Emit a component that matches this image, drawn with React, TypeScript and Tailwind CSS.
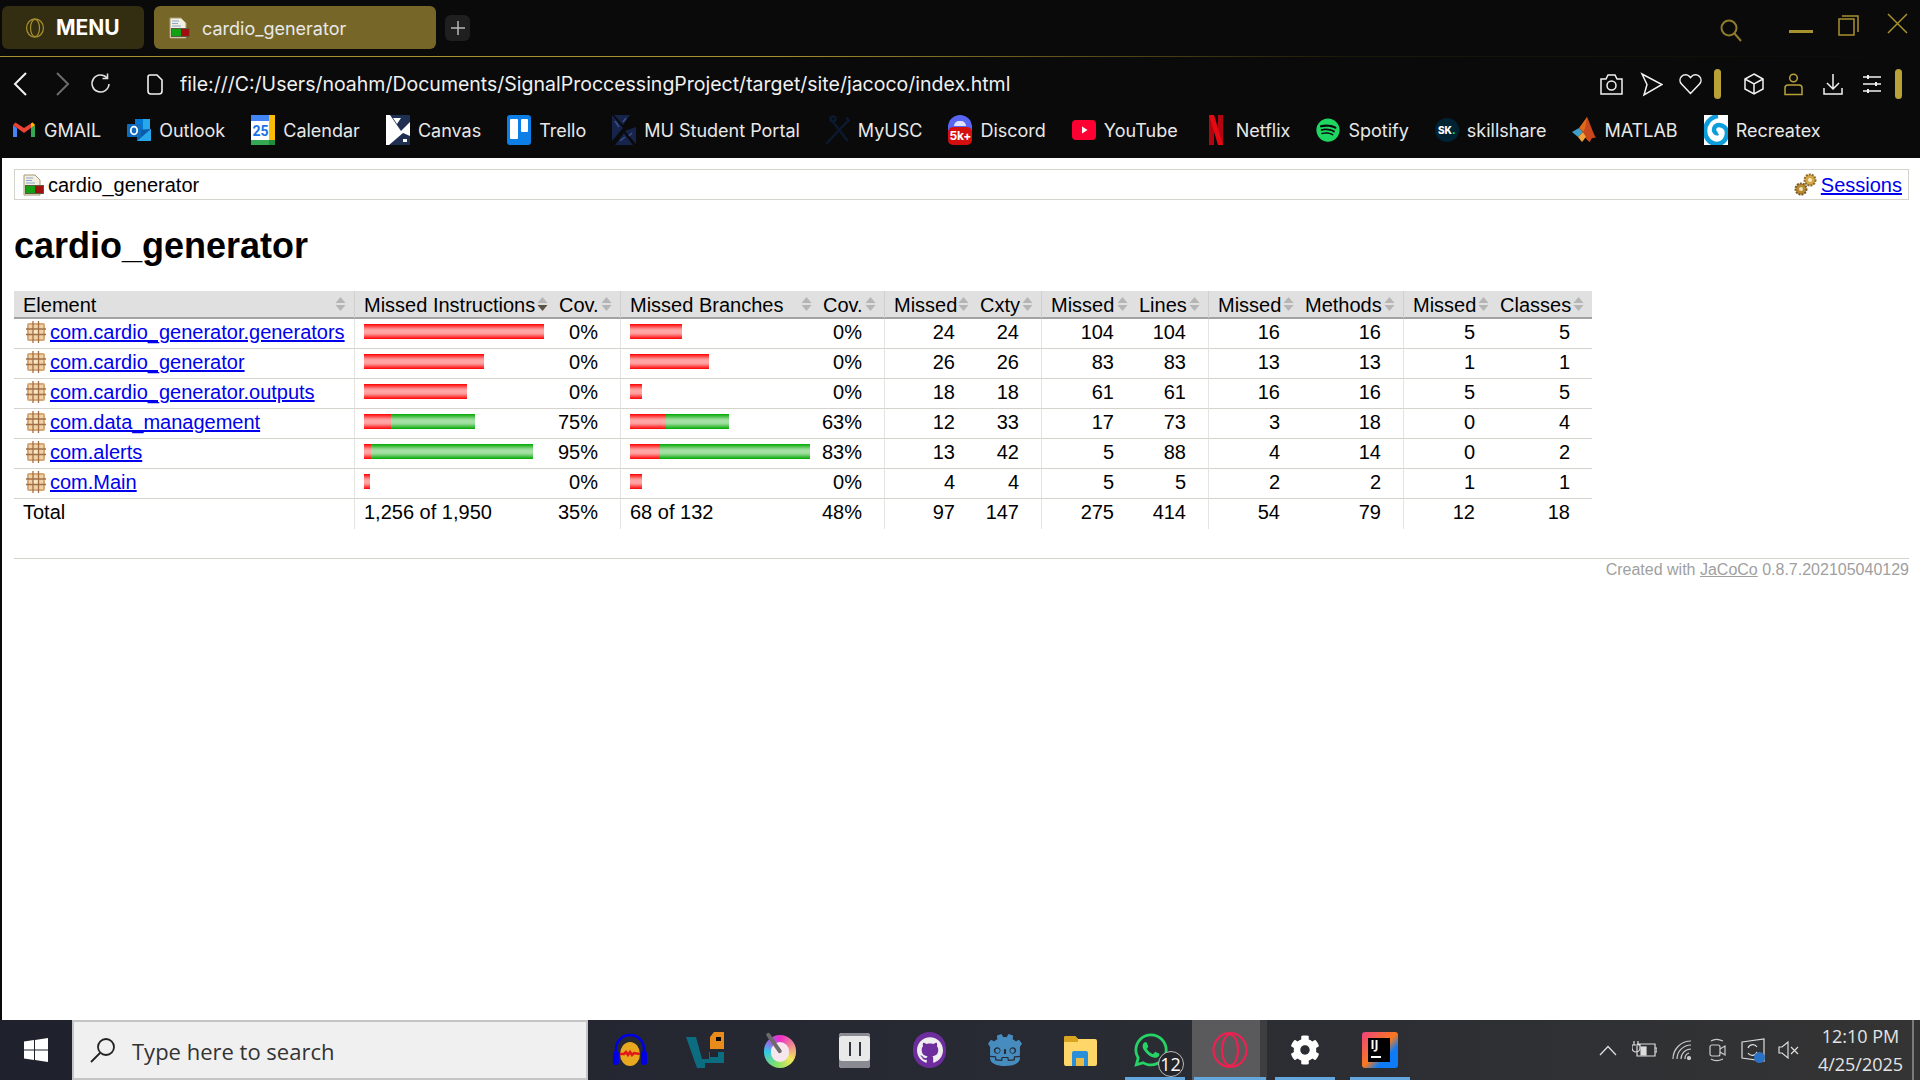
import { FaCog, FaSpotify, FaWhatsapp } from "react-icons/fa"
import { SiGithub, SiGodotengine } from "react-icons/si"

type Row = {
  name: string
  ins: [number, number]
  insCov: string
  br: [number, number]
  brCov: string
  nums: string[]
}

const rows: Row[] = [
  { name: "com.cardio_generator.generators", ins: [180, 0], insCov: "0%", br: [52, 0], brCov: "0%", nums: ["24", "24", "104", "104", "16", "16", "5", "5"] },
  { name: "com.cardio_generator", ins: [120, 0], insCov: "0%", br: [79, 0], brCov: "0%", nums: ["26", "26", "83", "83", "13", "13", "1", "1"] },
  { name: "com.cardio_generator.outputs", ins: [103, 0], insCov: "0%", br: [12, 0], brCov: "0%", nums: ["18", "18", "61", "61", "16", "16", "5", "5"] },
  { name: "com.data_management", ins: [27, 84], insCov: "75%", br: [36, 63], brCov: "63%", nums: ["12", "33", "17", "73", "3", "18", "0", "4"] },
  { name: "com.alerts", ins: [7, 162], insCov: "95%", br: [30, 150], brCov: "83%", nums: ["13", "42", "5", "88", "4", "14", "0", "2"] },
  { name: "com.Main", ins: [6, 0], insCov: "0%", br: [12, 0], brCov: "0%", nums: ["4", "4", "5", "5", "2", "2", "1", "1"] },
]

const totals = ["97", "147", "275", "414", "54", "79", "12", "18"]

const bookmarks: { label: string; icon: React.ReactNode }[] = [
  { label: "GMAIL", icon: <GmailIcon /> },
  { label: "Outlook", icon: <OutlookIcon /> },
  { label: "Calendar", icon: <CalendarIcon /> },
  { label: "Canvas", icon: <CanvasIcon /> },
  { label: "Trello", icon: <TrelloIcon /> },
  { label: "MU Student Portal", icon: <PortalIcon /> },
  { label: "MyUSC", icon: <ToolsIcon /> },
  { label: "Discord", icon: <DiscordIcon /> },
  { label: "YouTube", icon: <YoutubeIcon /> },
  { label: "Netflix", icon: <NetflixIcon /> },
  { label: "Spotify", icon: <FaSpotify className="h-6 w-6 text-[#1ed760]" /> },
  { label: "skillshare", icon: <SkillshareIcon /> },
  { label: "MATLAB", icon: <MatlabIcon /> },
  { label: "Recreatex", icon: <RecreatexIcon /> },
]

function GmailIcon() {
  return (
    <svg width="24" height="24" viewBox="0 0 24 24">
      <path d="M1 7v12h4V10z" fill="#4285f4" />
      <path d="M23 7v12h-4V10z" fill="#34a853" />
      <path d="M1 7l11 8 11-8-2.500-2.500L12 10 3.500 4.500z" fill="#ea4335" />
      <path d="M19 10l4-3-2.500-2.500L19 5.600z" fill="#fbbc04" />
    </svg>
  )
}

function OutlookIcon() {
  return (
    <svg width="24" height="24" viewBox="0 0 24 24">
      <rect x="8" y="1" width="15" height="11" fill="#28a8ea" />
      <rect x="8" y="1" width="8" height="11" fill="#0078d4" />
      <path d="M10 12l14-1v11a1 1 0 0 1-1 1H10z" fill="#0a5ca8" />
      <path d="M10 23l14-12v11a1 1 0 0 1-1 1z" fill="#28a8ea" />
      <rect x="0" y="6" width="14" height="13" rx="1" fill="#0f6cbd" />
      <ellipse cx="7" cy="12.500" rx="3.200" ry="3.800" fill="none" stroke="#fff" strokeWidth="1.800" />
    </svg>
  )
}

function CalendarIcon() {
  return (
    <svg width="24" height="30" viewBox="0 0 24 30">
      <rect width="24" height="30" rx="2" fill="#fff" />
      <rect width="24" height="6" fill="#4285f4" />
      <rect y="25" width="18" height="5" fill="#34a853" />
      <rect x="18" width="6" height="25" fill="#fbbc04" />
      <rect x="18" y="25" width="6" height="5" fill="#1e8e3e" />
      <text x="9.500" y="21" textAnchor="middle" fontSize="14" fontWeight="700" fill="#1a73e8" fontFamily="Roboto, sans-serif">25</text>
    </svg>
  )
}

function CanvasIcon() {
  return (
    <svg width="24" height="30" viewBox="0 0 24 30">
      <rect width="24" height="30" fill="#fff" />
      <path d="M4 0h20v7L15 16z" fill="#1f2f52" />
      <path d="M3 30h21v-9l-7-3z" fill="#1f2f52" />
      <path d="M7 3l4 6 4-6zM17 24h4v3h-4z" fill="#fff" />
    </svg>
  )
}

function TrelloIcon() {
  return (
    <svg width="24" height="30" viewBox="0 0 24 30">
      <rect width="24" height="30" rx="3" fill="#0c7ee6" />
      <rect x="3" y="4" width="8" height="20" rx="1" fill="#fff" />
      <rect x="14" y="4" width="7" height="13" rx="1" fill="#fff" />
    </svg>
  )
}

function PortalIcon() {
  return (
    <svg width="24" height="30" viewBox="0 0 24 30">
      <path d="M0 0l11 13L0 26zM2 0h16L11 10zM24 12v17L13 16zM3 30l9-12 9 12z" fill="#16234a" />
      <path d="M3 6l4 6M14 3l-3 4M20 18l-3 3M8 26l5-4" stroke="#3a4f86" strokeWidth="1.500" />
    </svg>
  )
}

function ToolsIcon() {
  return (
    <svg width="24" height="30" viewBox="0 0 24 30" fill="none" stroke="#0b1a2e" strokeWidth="2.500" strokeLinecap="round">
      <path d="M1 28L16 12l5-5M21 3l2 3" />
      <path d="M4 3l17 22" />
      <circle cx="7" cy="4" r="2.500" />
    </svg>
  )
}

function DiscordIcon() {
  return (
    <div className="relative h-[30px] w-6">
      <div className="h-[26px] w-6 rounded-full bg-[#5865f2]" />
      <div className="absolute left-1/2 top-[6px] h-[5px] w-3 -translate-x-1/2 rounded-t-full bg-white/80" />
      <span className="absolute bottom-0 left-0 flex h-[18px] w-6 items-center justify-center rounded-[5px] bg-[#d50e0e] text-[12px] font-bold leading-none text-white">5k+</span>
    </div>
  )
}

function YoutubeIcon() {
  return (
    <svg width="24" height="20" viewBox="0 0 24 20">
      <rect width="24" height="20" rx="4" fill="#ff0033" />
      <path d="M10 6.500l5.500 3.500-5.500 3.500z" fill="#fff" />
    </svg>
  )
}

function NetflixIcon() {
  return (
    <svg width="14" height="30" viewBox="0 0 14 30">
      <path d="M0 0h5v30l-5 0z" fill="#b1060f" />
      <path d="M9 0h5v30H9z" fill="#b1060f" />
      <path d="M0 0h5l9 30H9z" fill="#e50914" />
    </svg>
  )
}

function SkillshareIcon() {
  return (
    <div className="relative flex h-6 w-6 items-center justify-center rounded-full bg-[#002333] text-[10px] font-extrabold leading-none text-white">
      SK<span className="text-[#00ff84]">.</span>
    </div>
  )
}

function MatlabIcon() {
  return (
    <svg width="24" height="28" viewBox="0 0 24 28">
      <path d="M0 16l7-4 4 4-5 5z" fill="#3f9fc8" />
      <path d="M7 12l8-11 3 13-7 2z" fill="#e06a1b" />
      <path d="M15 1c3 6 6 16 9 21-3-1-5 0-6 4-3-1-5-5-7-10 3-4 3-10 4-15z" fill="#c9471a" />
      <path d="M6 21l5-5 3 5-4 5z" fill="#f2a33a" />
    </svg>
  )
}

function RecreatexIcon() {
  return (
    <svg width="24" height="30" viewBox="0 0 24 30">
      <rect width="24" height="30" fill="#fff" />
      <path d="M14 1C6 2 1 9 1 16c0 7 5 13 12 13 6 0 10-5 10-11 0-5-4-8-8-8-3 0-5 2-5 5 0 2 2 4 4 3" fill="none" stroke="#0e9ddb" strokeWidth="4.500" />
    </svg>
  )
}

function ReportIcon() {
  return (
    <svg width="22" height="22" viewBox="0 0 22 22">
      <path d="M2 1h11l5 5v15H2z" fill="#f3efe0" stroke="#a89a72" />
      <path d="M4 4h7M4 6.500h6M4 9h9" stroke="#8aa8d0" />
      <rect x="3" y="11" width="19" height="9" fill="#5b5a44" />
      <rect x="4" y="12" width="9" height="7" fill="#12a112" />
      <rect x="13" y="12" width="8" height="7" fill="#a00f0f" />
    </svg>
  )
}

function PackageIcon() {
  return (
    <svg width="20" height="22" viewBox="0 0 20 22" className="shrink-0">
      <rect x="1" y="2" width="18" height="18" rx="2" fill="#d9a877" />
      <rect x="3" y="4" width="14" height="14" fill="#f0d2a8" />
      <rect x="7" y="8" width="6" height="6" fill="#f9e6c6" />
      <path d="M7 0v22M12.500 0v22M0 8h20M0 13.500h20" stroke="#a06f45" strokeWidth="1.300" />
    </svg>
  )
}

function GearsIcon() {
  return (
    <svg width="24" height="24" viewBox="0 0 24 24">
      <circle cx="7" cy="16" r="5.500" fill="#b98a35" stroke="#7d5a25" strokeDasharray="2 1" strokeWidth="2" />
      <circle cx="7" cy="16" r="2" fill="#efe3b5" />
      <circle cx="16" cy="7" r="5.500" fill="#d3a64a" stroke="#916c2a" strokeDasharray="2 1" strokeWidth="2" />
      <circle cx="16" cy="7" r="2" fill="#f5ecc4" />
    </svg>
  )
}

function SortArrow({ active }: { active?: boolean }) {
  return (
    <svg width="11" height="14" viewBox="0 0 11 14" className="absolute right-[8px] top-[6px]">
      <path d="M5.500 0l5 6h-10z" fill="#b5b5b5" />
      <path d="M5.500 14l5-6h-10z" fill={active ? "#5a5044" : "#b5b5b5"} />
    </svg>
  )
}

function Th({ label, first, left, active, className }: { label: string; first?: boolean; left?: boolean; active?: boolean; className: string }) {
  return (
    <th className={`relative h-[27px] whitespace-nowrap border-b-2 border-[#a3a3a3] bg-[#e0e0e0] p-0 font-normal ${left ? "text-left" : "text-right"} ${first ? "border-l border-l-[#cfcfcf]" : ""} ${className}`}>
      <span className={`block pr-[22px] pt-[2px] ${first || left ? "pl-[9px]" : "pl-[3px]"}`}>{label}</span>
      <SortArrow active={active} />
    </th>
  )
}

function Num({ first, last, children }: { first?: boolean; last?: boolean; children: React.ReactNode }) {
  return (
    <td className={`h-[30px] p-0 pb-[4px] pr-[22px] text-right ${last ? "" : "border-b border-[#d6d3ce]"} ${first ? "border-l border-l-[#e6e4e0]" : ""}`}>
      {children}
    </td>
  )
}

function Bar({ parts }: { parts: [number, number] }) {
  return (
    <div className="flex h-[15px]">
      <div className="h-full bg-[linear-gradient(to_bottom,#ff0000,#ff9c9c_35%,#ffa8a8_50%,#ff9c9c_65%,#ff0000)]" style={{ width: parts[0] }} />
      <div className="h-full bg-[linear-gradient(to_bottom,#00a800,#98dc98_35%,#a8e2a8_50%,#98dc98_65%,#00a800)]" style={{ width: parts[1] }} />
    </div>
  )
}

function TaskSlot({ children, underline, className }: { children: React.ReactNode; underline?: string; className?: string }) {
  return (
    <div className={`relative flex h-full w-[75px] items-center justify-center ${className ?? ""}`}>
      {children}
      {underline && <div className={`absolute bottom-0 h-[3px] bg-[#63a7de] ${underline}`} />}
    </div>
  )
}

export default function App() {
  return (
    <div className="flex h-screen w-[1920px] flex-col overflow-hidden bg-white font-['Liberation_Sans',Arial,sans-serif] text-[20px] text-black">
      {/* Browser chrome */}
      <div className="h-[158px] shrink-0 bg-[#0a0a0a] font-['Inter',sans-serif] text-[#e8e8e8]">
        <div className="flex h-[56px] pl-[2px] pt-[6px]">
          <div className="flex h-[43px] w-[142px] items-center gap-[12px] rounded-md bg-[#332d12] pl-[24px] text-[21px] font-bold text-white">
            <svg width="18" height="20" viewBox="0 0 18 20" fill="none" stroke="#a8912f" strokeWidth="1.200">
              <ellipse cx="9" cy="10" rx="8.400" ry="9.200" />
              <ellipse cx="9" cy="10" rx="4.500" ry="8.600" />
            </svg>
            MENU
          </div>
          <div className="ml-[10px] flex h-[43px] w-[282px] items-center gap-[12px] rounded-md bg-[#766729] pl-[14px] text-[18px]">
            <ReportIcon />
            <span className="pt-[1px]">cardio_generator</span>
          </div>
          <div className="ml-[9px] mt-[9px] flex h-[26px] w-[25px] items-center justify-center rounded-md bg-[#1f1f1f]">
            <svg width="14" height="14" viewBox="0 0 14 14" stroke="#b8b8b8" strokeWidth="1.500">
              <path d="M7 0v14M0 7h14" />
            </svg>
          </div>
          <div className="ml-auto flex items-start pr-[12px] text-[#a8912f]">
            <svg width="24" height="24" viewBox="0 0 24 24" fill="none" stroke="#8f7d2c" strokeWidth="2" className="mt-[12px]">
              <circle cx="10" cy="10" r="7.500" />
              <path d="M15.500 15.500L22 23" />
            </svg>
            <div className="ml-[46px] mt-[24px] h-[3px] w-[24px] bg-[#a8912f]" />
            <svg width="21" height="21" viewBox="0 0 21 21" fill="none" stroke="#a8912f" strokeWidth="1.500" className="ml-[25px] mt-[9px]">
              <rect x="1" y="4" width="15" height="16" />
              <path d="M4 1h16v16" />
            </svg>
            <svg width="21" height="21" viewBox="0 0 21 21" stroke="#a8912f" strokeWidth="1.500" className="ml-[28px] mt-[7px]">
              <path d="M1 1l19 19M20 1L1 20" />
            </svg>
          </div>
        </div>
        <div className="h-px bg-[linear-gradient(90deg,#a8912f,#a8912f_40%,#1a1808_70%,#0a0a0a)]" />
        <div className="flex h-[54px] items-center pl-[13px] pr-[18px]">
          <svg width="14" height="24" viewBox="0 0 14 24" fill="none" stroke="#f2f2f2" strokeWidth="2">
            <path d="M13 1L2 12l11 11" />
          </svg>
          <svg width="14" height="24" viewBox="0 0 14 24" fill="none" stroke="#6b6b6b" strokeWidth="2" className="ml-[29px]">
            <path d="M1 1l11 11L1 23" />
          </svg>
          <svg width="20" height="22" viewBox="0 0 20 22" fill="none" stroke="#e0e0e0" strokeWidth="1.600" className="ml-[20px]">
            <path d="M17 5a8.500 8.500 0 1 0 2 6" />
            <path d="M12.500 5.500h5v-5" />
          </svg>
          <svg width="16" height="21" viewBox="0 0 16 21" fill="none" stroke="#f2f2f2" strokeWidth="1.600" className="ml-[37px]">
            <path d="M3 1h7l5 5v11a3 3 0 0 1-3 3H4a3 3 0 0 1-3-3V3a2 2 0 0 1 2-2z" />
          </svg>
          <span className="ml-[17px] pt-[2px] text-[19.500px] text-[#f0f0f0]">file:///C:/Users/noahm/Documents/SignalProccessingProject/target/site/jacoco/index.html</span>
          <div className="ml-auto flex items-center">
            <svg width="23" height="21" viewBox="0 0 23 21" fill="none" stroke="#f2f2f2" strokeWidth="1.500">
              <path d="M1 5h5l2-4h7l2 4h5v15H1z" />
              <circle cx="11.500" cy="11.500" r="4.500" />
            </svg>
            <svg width="23" height="25" viewBox="0 0 23 25" fill="none" stroke="#f2f2f2" strokeWidth="1.500" className="ml-[17px]">
              <path d="M2 2l20 10.500L4 23l3-10.500z" />
            </svg>
            <svg width="23" height="22" viewBox="0 0 23 22" fill="none" stroke="#f2f2f2" strokeWidth="1.500" className="ml-[16px]">
              <path d="M11.500 20.500L2.500 11a5.500 5.500 0 0 1 0-7.500 5.500 5.500 0 0 1 8 0l1 1.200 1-1.200a5.500 5.500 0 0 1 8 0 5.500 5.500 0 0 1 0 7.500z" />
            </svg>
            <div className="ml-[12px] h-[30px] w-[7px] rounded-sm bg-[#b8a238]" />
            <svg width="20" height="22" viewBox="0 0 20 22" fill="none" stroke="#f2f2f2" strokeWidth="1.500" className="ml-[23px]">
              <path d="M10 1l9 5v10l-9 5-9-5V6zM1 6l9 5 9-5M10 11v10" />
            </svg>
            <svg width="19" height="23" viewBox="0 0 19 23" fill="none" stroke="#b8a238" strokeWidth="1.500" className="ml-[20px]">
              <circle cx="9.500" cy="5" r="3.800" />
              <path d="M1 21.500V15a3 3 0 0 1 3-3h11a3 3 0 0 1 3 3v6.500z" />
            </svg>
            <svg width="20" height="22" viewBox="0 0 20 22" fill="none" stroke="#f2f2f2" strokeWidth="1.500" className="ml-[20px]">
              <path d="M10 1v15M4 10l6 6 6-6M1 15v6h18v-6" />
            </svg>
            <svg width="20" height="20" viewBox="0 0 20 20" fill="none" stroke="#f2f2f2" strokeWidth="1.400" className="ml-[19px]">
              <path d="M1 3h18M1 10h18M1 17h18" />
              <path d="M6 1v4M14 8v4M6 15v4" strokeWidth="2" />
            </svg>
            <div className="ml-[13px] h-[30px] w-[7px] rounded-sm bg-[#b8a238]" />
          </div>
        </div>
        <div className="flex h-[47px] items-center gap-[26px] pb-[9px] pl-[12px] text-[18px]">
          {bookmarks.map((b) => (
            <div key={b.label} className="flex items-center gap-[8px]">
              <div className="flex h-[30px] w-6 items-center justify-center">{b.icon}</div>
              {b.label}
            </div>
          ))}
        </div>
      </div>

      {/* Report page */}
      <div className="flex min-h-0 flex-1">
        <div className="w-[2px] bg-[#0a0a0a]" />
        <div className="flex-1 pl-[12px] pr-[11px] pt-[11px]">
          <div className="flex h-[31px] items-center justify-between border border-[#d6d3ce] pl-[7px] pr-[6px]">
            <div className="flex items-center gap-[4px]">
              <ReportIcon />
              cardio_generator
            </div>
            <div className="flex items-center gap-[3px]">
              <GearsIcon />
              <a className="text-[#0000ee] underline">Sessions</a>
            </div>
          </div>
          <h1 className="mb-[25px] mt-[26px] text-[36px] font-bold leading-[40px]">cardio_generator</h1>
          <table className="w-[1578px] table-fixed border-separate border-spacing-0 leading-[24px]">
            <thead>
              <tr>
                <Th label="Element" left className="w-[340px]" />
                <Th label="Missed Instructions" first left active className="w-[202px]" />
                <Th label="Cov." className="w-[64px]" />
                <Th label="Missed Branches" first left className="w-[200px]" />
                <Th label="Cov." className="w-[64px]" />
                <Th label="Missed" first className="w-[93px]" />
                <Th label="Cxty" className="w-[64px]" />
                <Th label="Missed" first className="w-[95px]" />
                <Th label="Lines" className="w-[72px]" />
                <Th label="Missed" first className="w-[94px]" />
                <Th label="Methods" className="w-[101px]" />
                <Th label="Missed" first className="w-[94px]" />
                <Th label="Classes" className="w-[95px]" />
              </tr>
            </thead>
            <tbody>
              {rows.map((r) => (
                <tr key={r.name}>
                  <td className="h-[30px] border-b border-[#d6d3ce] p-0 pb-[3px] pl-[12px]">
                    <div className="flex items-center gap-[4px]">
                      <PackageIcon />
                      <a className="whitespace-nowrap text-[#0000ee] underline">{r.name}</a>
                    </div>
                  </td>
                  <td className="h-[30px] border-b border-l border-[#d6d3ce] border-l-[#e6e4e0] p-0 pb-[4px] pl-[9px]"><Bar parts={r.ins} /></td>
                  <Num>{r.insCov}</Num>
                  <td className="h-[30px] border-b border-l border-[#d6d3ce] border-l-[#e6e4e0] p-0 pb-[4px] pl-[9px]"><Bar parts={r.br} /></td>
                  <Num>{r.brCov}</Num>
                  {r.nums.map((n, i) => (
                    <Num key={i} first={i % 2 === 0}>{n}</Num>
                  ))}
                </tr>
              ))}
              <tr>
                <td className="h-[30px] p-0 pb-[4px] pl-[9px]">Total</td>
                <td className="border-l border-l-[#e6e4e0] p-0 pb-[4px] pl-[9px]">1,256 of 1,950</td>
                <Num last>35%</Num>
                <td className="border-l border-l-[#e6e4e0] p-0 pb-[4px] pl-[9px]">68 of 132</td>
                <Num last>48%</Num>
                {totals.map((n, i) => (
                  <Num key={i} last first={i % 2 === 0}>{n}</Num>
                ))}
              </tr>
            </tbody>
          </table>
          <div className="mt-[29px] border-t border-[#d6d3ce] text-right text-[16px] leading-[22px] text-[#a0a0a0]">
            Created with <a className="underline">JaCoCo</a> 0.8.7.202105040129
          </div>
        </div>
      </div>

      {/* Windows taskbar */}
      <div className="flex h-[60px] shrink-0 bg-[linear-gradient(90deg,#1f222d,#272a33_50%,#343434)] font-['Open_Sans',sans-serif] text-[#f0f0f0]">
        <div className="flex w-[72px] items-center justify-center pr-[1px]">
          <svg width="24" height="24" viewBox="0 0 24 24" fill="#fff">
            <path d="M0 3.500l10-1.400V11.500H0zM11 2l13-2v11.500H11zM0 12.500h10v9.400L0 20.500zM11 12.500h13V24l-13-2z" />
          </svg>
        </div>
        <div className="flex w-[516px] items-center border-2 border-[#c5c5c5] bg-[#f0f0f0] pl-[16px] text-[22px] text-[#333]">
          <svg width="26" height="26" viewBox="0 0 26 26" fill="none" stroke="#222" strokeWidth="1.800">
            <circle cx="16" cy="10" r="8" />
            <path d="M10 16L1 25" />
          </svg>
          <span className="ml-[16px] pt-[3px]">Type here to search</span>
        </div>
        <div className="ml-[4px] flex">
          <TaskSlot>
            <svg width="36" height="36" viewBox="0 0 36 36">
              <path d="M4 24V17a14 14 0 0 1 28 0v7" fill="none" stroke="#0000e6" strokeWidth="2.500" />
              <rect x="1" y="19" width="6" height="14" rx="3" fill="#0000e6" />
              <rect x="29" y="19" width="6" height="14" rx="3" fill="#0000e6" />
              <ellipse cx="18" cy="22" rx="10" ry="12" fill="#e8a820" />
              <path d="M8 22h4l2-2 2 3 2-3 2 3 2-2 6 1" stroke="#e01818" strokeWidth="2.500" fill="none" />
            </svg>
          </TaskSlot>
          <TaskSlot>
            <svg width="38" height="36" viewBox="0 0 38 36">
              <path d="M0 5h10l6 22h7v-7h15v11H19v5h-8z" fill="#0c6c80" />
              <path d="M24 5l4-5h10v17H24z" fill="#e88b1a" />
              <rect x="30" y="5" width="5" height="4" fill="#0a0a0a" />
              <path d="M24 20h8v5h-8z" fill="#22252e" />
            </svg>
          </TaskSlot>
          <TaskSlot>
            <div className="relative h-[36px] w-[32px]">
              <div className="absolute bottom-0 left-0 flex h-[33px] w-[32px] items-center justify-center rounded-full bg-[conic-gradient(#ee2ec8,#f0e85a_35%,#7ee06a_55%,#35c6e8_75%,#a060e0,#ee2ec8)]">
                <div className="h-[20px] w-[18px] rounded-full bg-[#f6e6ee]" />
              </div>
              <div className="absolute left-[8px] top-[-1px] h-[24px] w-[4px] -rotate-[35deg] rounded-full bg-[#6b6b6b]" />
            </div>
          </TaskSlot>
          <TaskSlot>
            <div className="flex h-[35px] w-[31px] justify-center gap-[8px] rounded-[3px] bg-[#e9e9e9] pt-[9px] shadow-[inset_0_-7px_0_#8a8a92,inset_0_3px_0_#8a8a92]">
              <div className="h-[14px] w-[2px] bg-[#33363e]" />
              <div className="h-[14px] w-[2px] bg-[#33363e]" />
            </div>
          </TaskSlot>
          <TaskSlot>
            <div className="flex h-[36px] w-[33px] items-center justify-center rounded-full bg-[#6d2d9c]">
              <SiGithub className="h-[26px] w-[26px] text-[#eee]" />
            </div>
          </TaskSlot>
          <TaskSlot>
            <SiGodotengine className="h-[36px] w-[34px] text-[#478cbf]" />
          </TaskSlot>
          <TaskSlot>
            <svg width="34" height="34" viewBox="0 0 34 34">
              <path d="M1 5a2 2 0 0 1 2-2h9l3 3h17a2 2 0 0 1 2 2v23a2 2 0 0 1-2 2H3a2 2 0 0 1-2-2z" fill="#ffd768" />
              <path d="M1 5a2 2 0 0 1 2-2h9l3 3v3H1z" fill="#d9a521" />
              <path d="M9 33V20a2 2 0 0 1 2-2h12a2 2 0 0 1 2 2v13z" fill="#2a8fd8" />
              <path d="M13 33v-8h8v8z" fill="#e8bb45" />
            </svg>
          </TaskSlot>
          <TaskSlot underline="left-[8px] w-[60px]">
            <div className="relative -ml-[8px]">
              <FaWhatsapp className="h-[38px] w-[38px] text-[#25d366]" />
              <span className="absolute -bottom-[8px] -right-[14px] flex h-[26px] w-[26px] items-center justify-center rounded-full border border-[#bbb] bg-[#25262c] text-[18px] leading-none text-white">12</span>
            </div>
          </TaskSlot>
          <TaskSlot underline="left-[2px] w-[72px]" className="bg-[linear-gradient(90deg,#5a5a5c_0,#5a5a5c_90%,#3e3e40_90%)]">
            <svg width="36" height="38" viewBox="0 0 36 38" fill="none" stroke="#ee2050" strokeWidth="2.200">
              <ellipse cx="18" cy="19" rx="16.500" ry="17" />
              <ellipse cx="18" cy="19" rx="8" ry="15.500" />
            </svg>
          </TaskSlot>
          <TaskSlot underline="left-[8px] w-[60px]">
            <FaCog className="h-[30px] w-[30px] text-white" />
          </TaskSlot>
          <TaskSlot underline="left-[8px] w-[60px]">
            <div className="relative h-[36px] w-[36px] rounded-[3px] bg-[linear-gradient(135deg,#f0417e,#f97a1e_50%,#0d7bf5_70%)]">
              <div className="absolute left-[6px] top-[6px] flex h-[24px] w-[22px] flex-col bg-black pl-[3px] pt-[1px] text-[12px] font-bold leading-none text-white">
                IJ
                <div className="mt-[5px] h-[2px] w-[10px] bg-white" />
              </div>
            </div>
          </TaskSlot>
        </div>
        <div className="flex flex-1 items-center justify-end">
          <svg width="18" height="11" viewBox="0 0 18 11" fill="none" stroke="#ddd" strokeWidth="1.300" className="mr-[15px]">
            <path d="M1 10l8-8.500 8 8.500" />
          </svg>
          <svg width="25" height="20" viewBox="0 0 25 20" fill="none" stroke="#ddd" strokeWidth="1.200" className="mr-[15px]">
            <path d="M5 6v10h18V4H5M0 0M2 1v4M6 1v4M0 5h8v3a4 4 0 0 1-8 0zM23 8h2v4h-2" />
            <rect x="9" y="7" width="5" height="8" fill="#ddd" />
          </svg>
          <svg width="21" height="20" viewBox="0 0 21 20" fill="none" stroke="#ccc" strokeWidth="1.200" className="mr-[16px]">
            <path d="M1 19A18 18 0 0 1 19 1M5 19A14 14 0 0 1 19 5M9 19A10 10 0 0 1 19 9M13 19a6 6 0 0 1 4-6" />
            <circle cx="17" cy="18" r="1.500" fill="#ccc" />
          </svg>
          <svg width="17" height="24" viewBox="0 0 17 24" fill="none" stroke="#ccc" strokeWidth="1.200" className="mr-[15px]">
            <rect x="1" y="7" width="10" height="11" rx="2" />
            <path d="M11 11l5-3v9l-5-3M2 3c3-2 8-2 12 0M2 21c3 2 8 2 12 0" />
          </svg>
          <div className="relative mr-[13px] h-[24px] w-[24px]">
            <svg width="24" height="24" viewBox="0 0 24 24" fill="none" stroke="#ddd" strokeWidth="1.200">
              <path d="M1 4l22-3v22L1 20z" />
              <path d="M7 10a5 5 0 0 1 9-1M16 14a5 5 0 0 1-9 1" />
            </svg>
            <div className="absolute -bottom-[1px] right-0 h-[11px] w-[11px] rounded-full bg-[#2a72c4]" />
          </div>
          <svg width="21" height="20" viewBox="0 0 21 20" fill="none" stroke="#ddd" strokeWidth="1.200" className="mr-[20px]">
            <path d="M1 7v6h3l6 5V2L4 7zM13 7l7 7M20 7l-7 7" />
          </svg>
          <div className="mr-[10px] flex w-[83px] flex-col items-center whitespace-nowrap text-[18px] leading-[28px] text-[#e4e4e4]">
            <span>12:10 PM</span>
            <span>4/25/2025</span>
          </div>
          <div className="h-full w-[2px] bg-[#7a7a7a]" />
          <div className="w-[6px]" />
        </div>
      </div>
    </div>
  )
}
